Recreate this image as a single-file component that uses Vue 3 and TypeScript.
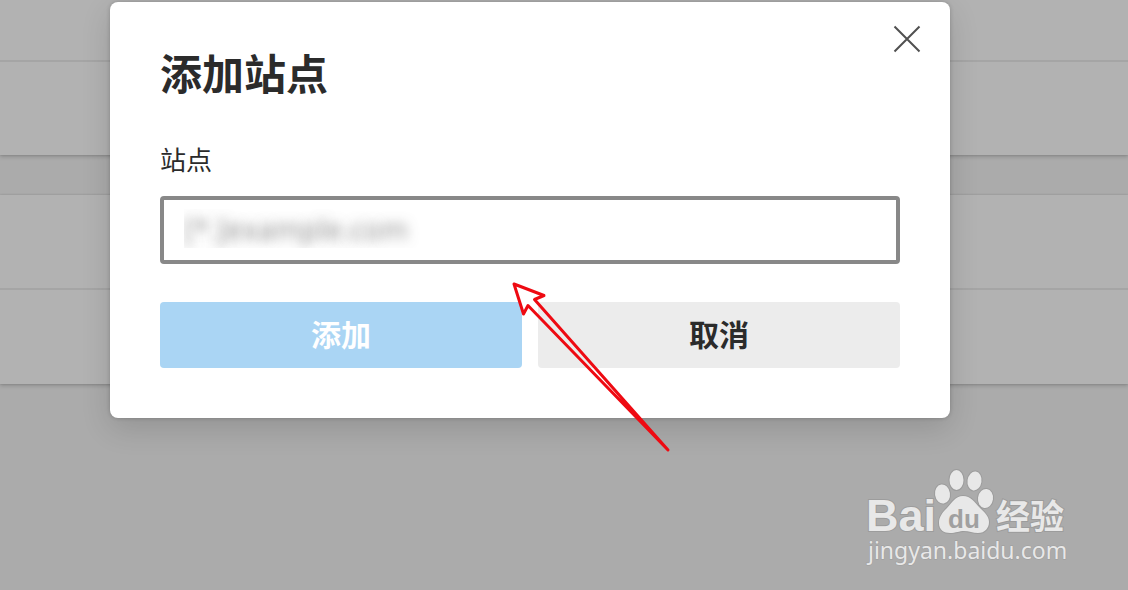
<script setup lang="ts">
import { ref } from 'vue'

const site = ref<string>('')
const groups: { id: string; rows: number[] }[] = [
  { id: 'first', rows: [1, 2] },
  { id: 'second', rows: [1, 2] },
]
</script>

<template>
  <main class="page">
    <div class="groups" aria-hidden="true">
      <section v-for="group in groups" :key="group.id" class="group" :class="group.id">
        <div v-for="row in group.rows" :key="row" class="row"></div>
      </section>
    </div>

    <div class="overlay">
      <form class="dialog" role="dialog" aria-labelledby="dialog-title" @submit.prevent>
        <button class="close" type="button" aria-label="关闭">
          <svg viewBox="0 0 28 28" width="28" height="28" aria-hidden="true">
            <path d="M1.5 1.5 26.5 26.5M26.5 1.5 1.5 26.5" />
          </svg>
        </button>
        <h1 id="dialog-title">添加站点</h1>
        <label for="site">站点</label>
        <input id="site" v-model="site" type="text" placeholder="[*.]example.com" />
        <div class="actions">
          <button class="add" type="submit">添加</button>
          <button class="cancel" type="button">取消</button>
        </div>
      </form>
    </div>

    <svg class="arrow" viewBox="0 0 164 176" width="164" height="176" aria-hidden="true">
      <path d="M158 170 24.500 19.500 34 15.500 4 4 13.500 34 18 25.500Z" />
    </svg>

    <svg class="watermark" viewBox="0 0 210 105" width="210" height="105" role="img" aria-label="Baidu 经验">
      <text class="bai" x="4" y="66">Bai</text>
      <g class="paw">
        <ellipse cx="80.500" cy="29" rx="7.500" ry="9.500" transform="rotate(-8 80.500 29)" />
        <ellipse cx="94.500" cy="15" rx="7" ry="10" />
        <ellipse cx="112.500" cy="16" rx="7" ry="9.500" transform="rotate(8 112.500 16)" />
        <ellipse cx="123.500" cy="33.500" rx="7.500" ry="9.500" transform="rotate(8 123.500 33.500)" />
        <path d="M101 31C93 31 90 38 85 43C80 48 77 52 77 58C77 65 82 68 88 68C94 68 97 66 102 66C107 66 111 68 116 68C123 68 127 63 127 57C127 51 122 47 118 43C112 37 109 31 101 31Z" />
      </g>
      <text class="du" x="86" y="63">du</text>
      <text class="exp" x="134" y="64">经验</text>
      <text class="url" x="6" y="94">jingyan.baidu.com</text>
    </svg>
  </main>
</template>

<style>
html,
body {
  margin: 0;
  background: #ababab;
}
</style>

<style scoped>
* {
  box-sizing: border-box;
}

.page {
  position: relative;
  min-height: 100vh;
  overflow: hidden;
  background: #ababab;
  font-family: "Liberation Sans", "Noto Sans CJK SC", sans-serif;
  color: #2b2b2b;
}

.groups {
  display: flex;
  flex-direction: column;
  gap: 40px;
}

.group {
  background: #b2b2b2;
  box-shadow: 0 2px 4px rgba(0, 0, 0, 0.16), 0 0 2px rgba(0, 0, 0, 0.16);
}

.row {
  height: 95px;
}

.row + .row {
  border-top: 2px solid #a5a5a5;
}

.first .row:first-child {
  height: 60px;
}

.second .row:first-child {
  height: 93px;
}

.second .row:last-child {
  height: 96px;
}

.overlay {
  position: absolute;
  inset: 0;
  padding: 2px 178px 0 110px;
}

.dialog {
  position: relative;
  display: flex;
  flex-direction: column;
  padding: 46px 50px 50px;
  border-radius: 8px;
  background: #fff;
  box-shadow: 0 10px 30px rgba(0, 0, 0, 0.14), 0 0 4px rgba(0, 0, 0, 0.2);
}

.close {
  position: absolute;
  top: 16px;
  right: 22px;
  display: grid;
  place-items: center;
  width: 42px;
  height: 42px;
  padding: 0;
  border: 0;
  background: none;
}

.close path {
  fill: none;
  stroke: #505050;
  stroke-width: 2;
}

h1 {
  margin: 0 0 39px;
  font-size: 42px;
  font-weight: 700;
  line-height: 56px;
}

label {
  margin-bottom: 17px;
  font-size: 26px;
  line-height: 36px;
}

input {
  width: 100%;
  height: 68px;
  padding: 0 20px 4px;
  border: 4px solid #888;
  border-radius: 4px;
  outline: 0;
  background: #fff;
  font: 29px "Open Sans", "Noto Sans CJK SC", sans-serif;
  color: #2b2b2b;
}

input::placeholder {
  color: transparent;
  opacity: 1;
  text-shadow: 0 0 12px rgba(90, 90, 90, 0.7);
}

.actions {
  display: grid;
  grid-template-columns: 1fr 1fr;
  gap: 16px;
  margin-top: 38px;
}

.actions button {
  height: 66px;
  padding: 0 0 4px;
  border: 0;
  border-radius: 4px;
  font: 700 30px "Liberation Sans", "Noto Sans CJK SC", sans-serif;
}

.actions .add {
  background: #aad5f4;
  color: #fff;
}

.actions .cancel {
  background: #ececec;
  color: #2b2b2b;
}

.arrow {
  position: absolute;
  top: 280px;
  left: 510px;
  pointer-events: none;
}

.arrow path {
  fill: none;
  stroke: #ee0a12;
  stroke-width: 3;
  stroke-linejoin: round;
}

.watermark {
  position: absolute;
  right: 56px;
  bottom: 20px;
  overflow: visible;
}

.watermark text,
.paw {
  fill: #e8e8e8;
  stroke: #9c9c9c;
  stroke-width: 2px;
  paint-order: stroke;
}

.bai {
  font: 700 45px "Liberation Sans", sans-serif;
}

.watermark .du {
  font: 700 26px "Liberation Sans", sans-serif;
  fill: #a0a0a0;
  stroke: none;
}

.exp {
  font: 700 34px "Noto Sans CJK SC", sans-serif;
}

.watermark .url {
  font: 23px "Noto Sans", sans-serif;
  stroke-width: 1px;
}
</style>
